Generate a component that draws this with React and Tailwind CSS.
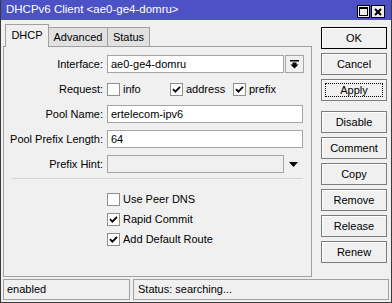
import React from "react";

const Check = ({ checked }) => (
  <span className="w-[13px] h-[13px] border border-[#8e8f8f] bg-white flex items-center justify-center shrink-0">
    {checked && (
      <svg width="9" height="9" viewBox="0 0 9 9">
        <path d="M1 4.2 L3.4 6.6 L8 1.8" stroke="#000" strokeWidth="1.8" fill="none" />
      </svg>
    )}
  </span>
);

const Btn = ({ children, def, focus }) => (
  <div
    className={`relative h-[22px] w-[66px] flex items-center justify-center bg-[#f0f0f0] border ${
      def ? "border-black" : "border-[#7c7c7c]"
    } shadow-[inset_1px_1px_0_#ffffff]`}
  >
    {focus && <span className="absolute inset-[3px] border border-dotted border-black" />}
    <span className="relative">{children}</span>
  </div>
);

const Label = ({ children }) => (
  <div className="w-[100px] text-right pr-[1px] shrink-0">{children}</div>
);

export default function App() {
  return (
    <div className="w-[392px] h-[303px] bg-[#f0f0f0] border border-t-0 border-[#3a3a3a] flex flex-col font-['Liberation_Sans',sans-serif] text-[11px] text-black overflow-hidden leading-none">
      <div className="h-[20px] bg-[#4c52c6] flex items-center pl-[5px] pr-[6px] text-white text-[11.5px] shrink-0">
        <span className="flex-1">DHCPv6 Client &lt;ae0-ge4-domru&gt;</span>
        <div className="flex gap-[1px] mt-[3px]">
          <div className="w-[13px] h-[13px] bg-[#ececec] border border-black flex items-center justify-center">
            <svg width="9" height="9" viewBox="0 0 9 9">
              <rect x="0.5" y="0.5" width="8" height="8" fill="none" stroke="#000" />
              <rect x="0" y="0" width="9" height="2" fill="#000" />
            </svg>
          </div>
          <div className="w-[14px] h-[13px] bg-[#ececec] border border-black flex items-center justify-center">
            <svg width="8" height="8" viewBox="0 0 8 8">
              <path d="M1 1 L7 7 M7 1 L1 7" stroke="#000" strokeWidth="2" />
            </svg>
          </div>
        </div>
      </div>

      <div className="flex pl-[2px] pr-[4px] shrink-0">
        <div className="w-[309px] flex flex-col">
          <div className="h-[22px] mt-[4px] flex items-end pl-[2px] relative z-10">
            <div className="w-[44px] h-[23px] mb-[-1px] bg-[#f0f0f0] border border-b-0 border-[#a0a0a0] flex items-center justify-center pb-[2px]">
              DHCP
            </div>
            <div className="w-[59px] h-[19px] bg-[#e1e1e1] border border-l-0 border-b-0 border-[#a0a0a0] flex items-center justify-center">
              Advanced
            </div>
            <div className="w-[42px] h-[19px] bg-[#e1e1e1] border border-l-0 border-b-0 border-[#a0a0a0] flex items-center justify-center">
              Status
            </div>
          </div>
          <div className="h-[231px] border border-[#a0a0a0] bg-[#f0f0f0] flex flex-col pt-[8px]">
            <div className="flex flex-col gap-[7px]">
              <div className="flex items-center h-[18px]">
                <Label>Interface:</Label>
                <div className="ml-[3px] w-[177px] h-[18px] bg-white border border-[#a5a5a5] flex items-center pl-[3px]">
                  ae0-ge4-domru
                </div>
                <div className="ml-[1px] w-[19px] h-[18px] border border-[#a5a5a5] bg-[#f0f0f0] flex items-center justify-center">
                  <svg width="9" height="9" viewBox="0 0 9 9">
                    <rect x="0" y="0" width="9" height="1.5" fill="#000" />
                    <path d="M2.5 2.5 H6.5 V4.5 H8.5 L4.5 8.5 L0.5 4.5 H2.5 Z" fill="#000" />
                  </svg>
                </div>
              </div>
              <div className="flex items-center h-[18px]">
                <Label>Request:</Label>
                <div className="ml-[3px] flex items-center">
                  <div className="w-[63px] flex items-center gap-[3px]">
                    <Check />
                    <span>info</span>
                  </div>
                  <div className="w-[63px] flex items-center gap-[3px]">
                    <Check checked />
                    <span>address</span>
                  </div>
                  <div className="flex items-center gap-[3px]">
                    <Check checked />
                    <span>prefix</span>
                  </div>
                </div>
              </div>
              <div className="flex items-center h-[18px]">
                <Label>Pool Name:</Label>
                <div className="ml-[3px] w-[196px] h-[18px] bg-white border border-[#a5a5a5] flex items-center pl-[3px]">
                  ertelecom-ipv6
                </div>
              </div>
              <div className="flex items-center h-[18px]">
                <Label>Pool Prefix Length:</Label>
                <div className="ml-[3px] w-[196px] h-[18px] bg-white border border-[#a5a5a5] flex items-center pl-[3px]">
                  64
                </div>
              </div>
              <div className="flex items-center h-[18px]">
                <Label>Prefix Hint:</Label>
                <div className="ml-[3px] w-[177px] h-[18px] bg-[#f0f0f0] border border-[#a5a5a5]" />
                <svg className="ml-[5px]" width="9" height="5" viewBox="0 0 9 5">
                  <path d="M0 0 H9 L4.5 5 Z" fill="#000" />
                </svg>
              </div>
            </div>
            <div className="mt-[5px] ml-[8px] w-[291px] h-[1px] bg-[#d5d5d5]" />
            <div className="mt-[10px] ml-[103px] flex flex-col">
              <div className="h-[20px] flex items-center gap-[3px]">
                <Check />
                <span>Use Peer DNS</span>
              </div>
              <div className="h-[20px] flex items-center gap-[3px]">
                <Check checked />
                <span>Rapid Commit</span>
              </div>
              <div className="h-[20px] flex items-center gap-[3px]">
                <Check checked />
                <span>Add Default Route</span>
              </div>
            </div>
          </div>
        </div>
        <div className="ml-[9px] pt-[7px] flex flex-col">
          <div className="flex flex-col gap-[4px]">
            <Btn def>OK</Btn>
            <Btn>Cancel</Btn>
            <Btn focus>Apply</Btn>
          </div>
          <div className="flex flex-col gap-[4px] mt-[10px]">
            <Btn>Disable</Btn>
            <Btn>Comment</Btn>
            <Btn>Copy</Btn>
            <Btn>Remove</Btn>
            <Btn>Release</Btn>
            <Btn>Renew</Btn>
          </div>
        </div>
      </div>

      <div className="flex gap-[3px] pl-[2px] pr-[2px] mt-[2px] h-[21px] shrink-0">
        <div className="w-[127px] h-full border border-[#a0a0a0] flex items-center pl-[3px]">enabled</div>
        <div className="flex-1 h-full border border-[#a0a0a0] flex items-center pl-[4px]">Status: searching...</div>
      </div>
    </div>
  );
}
